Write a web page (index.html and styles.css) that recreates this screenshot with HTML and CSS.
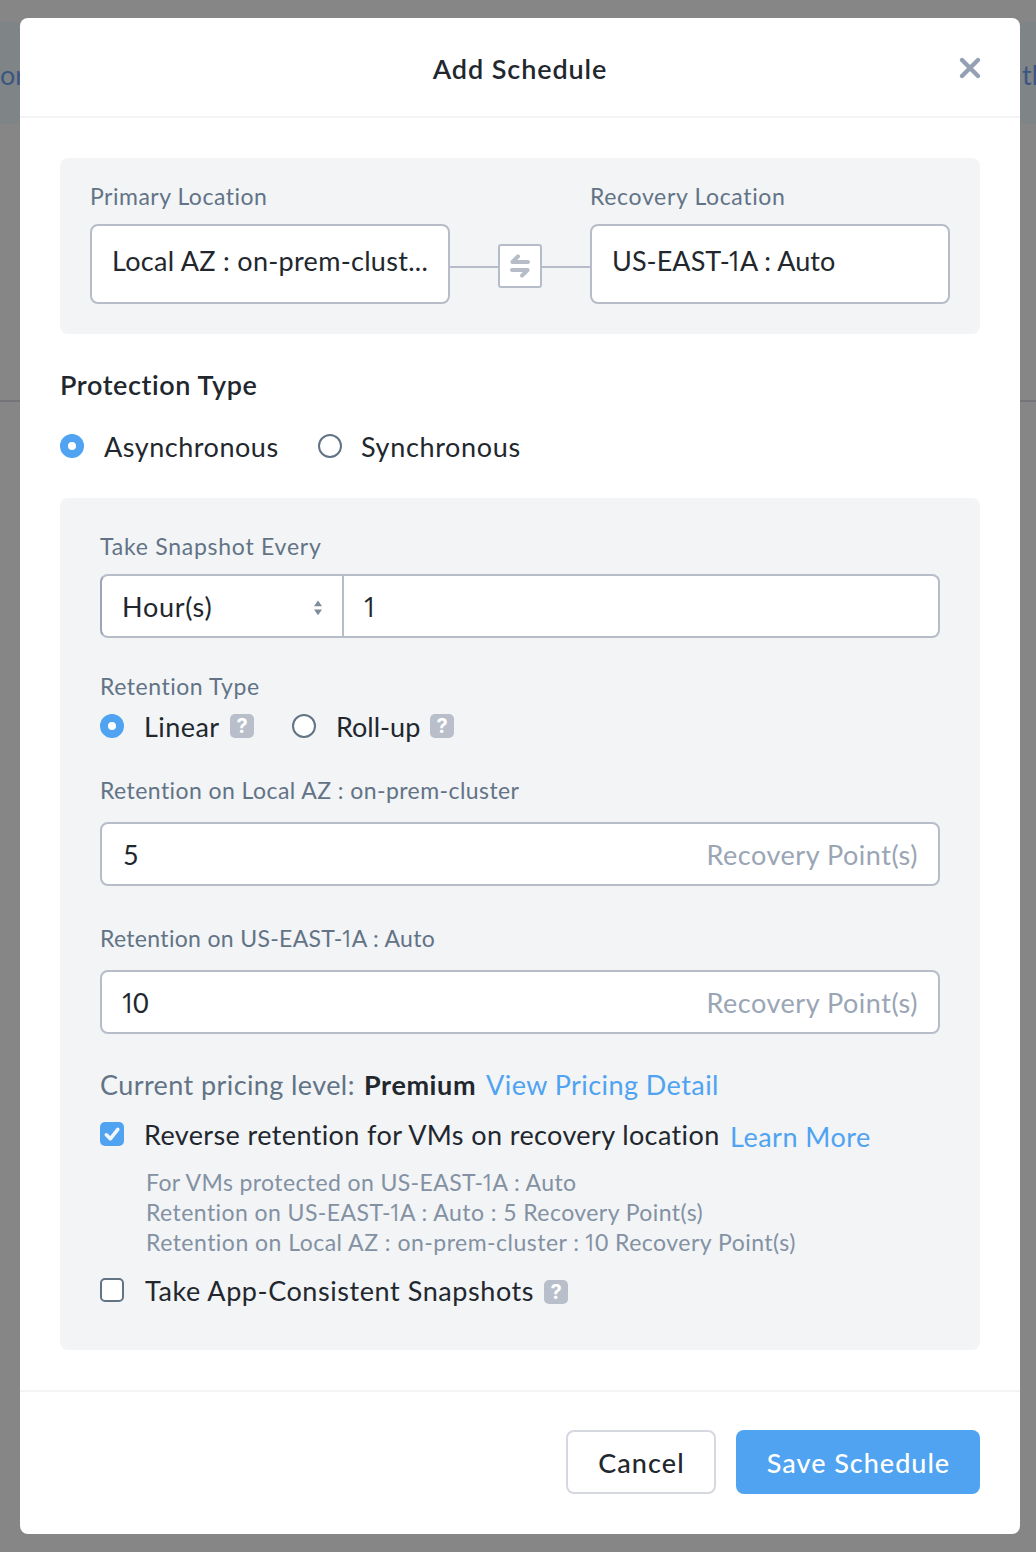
FILE: index.html
```html
<!DOCTYPE html>
<html lang="en">
<head>
<meta charset="utf-8">
<title>Add Schedule</title>
<link rel="stylesheet" href="styles.css">
</head>
<body>
<div class="backdrop">
  <div class="banner"><span>or</span><span class="banner-end">th</span></div>
  <div class="rule"></div>
</div>
<main class="modal">
  <header class="modal-header">
    <h1 class="title">Add Schedule</h1>
    <svg class="close" viewBox="0 0 24 24"><path d="M4 4L20 20M20 4L4 20"/></svg>
  </header>
  <div class="modal-body">
    <section class="locations">
      <div class="location">
        <div class="label primary-label">Primary Location</div>
        <div class="location-box onprem">Local AZ : on-prem-clust...</div>
      </div>
      <div class="connector">
        <div class="wire"></div>
        <div class="swap"><svg viewBox="0 0 20 24"><path d="M18 8H2.4L8 2.4M2 16H17.6L12 21.6"/></svg></div>
        <div class="wire"></div>
      </div>
      <div class="location">
        <div class="label recovery-label">Recovery Location</div>
        <div class="location-box east">US-EAST-<span class="one">1</span>A : Auto</div>
      </div>
    </section>

    <h2 class="section-title">Protection Type</h2>
    <div class="row protection">
      <span class="radio checked"></span><span class="text async">Asynchronous</span>
      <span class="radio"></span><span class="text sync">Synchronous</span>
    </div>

    <section class="settings">
      <div class="label snapshot-label">Take Snapshot Every</div>
      <div class="field combo">
        <div class="unit"><span>Hour(s)</span>
          <svg class="sort" viewBox="0 0 8 16"><path d="M4 .5L8 6.3H0ZM0 9.5H8L4 15.3Z"/></svg>
        </div>
        <div class="count"><span class="one">1</span></div>
      </div>

      <div class="label type-label">Retention Type</div>
      <div class="row retention">
        <span class="radio checked"></span><span class="text linear">Linear</span><span class="help">?</span>
        <span class="radio second"></span><span class="text rollup">Roll-up</span><span class="help">?</span>
      </div>

      <div class="label local-label">Retention on Local AZ : on-prem-cluster</div>
      <div class="field"><span>5</span><span class="suffix">Recovery Point(s)</span></div>

      <div class="label east-label">Retention on US-EAST-<span class="one">1</span>A : Auto</div>
      <div class="field"><span><span class="one">1</span>0</span><span class="suffix">Recovery Point(s)</span></div>

      <div class="row pricing">
        <span class="muted">Current pricing level:</span><strong class="level">Premium</strong><a class="link detail">View Pricing Detail</a>
      </div>
      <div class="row reverse">
        <span class="check on"><svg viewBox="0 0 24 24"><path d="M6.3 12.8L10.3 16.8L17.8 7.4"/></svg></span>
        <span class="text reverse-text">Reverse retention for VMs on recovery location</span><a class="link learn">Learn More</a>
      </div>
      <div class="notes">
        <div class="note-vms">For VMs protected on US-EAST-<span class="one">1</span>A : Auto</div>
        <div class="note-east">Retention on US-EAST-<span class="one">1</span>A : Auto : 5 Recovery Point(s)</div>
        <div class="note-local">Retention on Local AZ : on-prem-cluster : <span class="one">1</span>0 Recovery Point(s)</div>
      </div>
      <div class="row">
        <span class="check"></span><span class="text app">Take App-Consistent Snapshots</span><span class="help low">?</span>
      </div>
    </section>
  </div>
  <footer class="modal-footer">
    <button class="btn cancel">Cancel</button>
    <button class="btn save">Save Schedule</button>
  </footer>
</main>
</body>
</html>
```
FILE: styles.css
```css
* { box-sizing: border-box; }
body {
  margin: 0;
  height: 1552px;
  padding: 18px 16px 18px 20px;
  overflow: hidden;
  position: relative;
  background: #868686;
  color: #22272e;
  font: 400 27px/32px Lato, "Open Sans", sans-serif;
  white-space: nowrap;
}
.backdrop { position: absolute; inset: 0; padding-top: 22px; }
.banner {
  height: 102px;
  padding-top: 37px;
  display: flex;
  justify-content: space-between;
  background: #7f8587;
  color: #3c5580;
}
.banner-end { width: 14px; }
.rule { margin-top: 276px; height: 2px; background: #747578; }

.modal {
  position: relative;
  width: 1000px;
  height: 1516px;
  background: #fff;
  border-radius: 8px;
}
.modal-header {
  height: 100px;
  padding: 0 38px;
  display: grid;
  grid-template-columns: 24px 1fr 24px;
  align-items: center;
  border-bottom: 2px solid #f2f4f6;
}
.title {
  grid-column: 2;
  margin: 3px 0 0;
  text-align: center;
  font-size: 27px;
  font-weight: 600;
  letter-spacing: .9px;
}
.close { width: 24px; height: 24px; fill: none; stroke: #94a0b3; stroke-width: 4.4; stroke-linecap: round; margin-top: 2px; }
.modal-body { padding: 40px 40px 0; }

.locations {
  height: 176px;
  padding: 24px 30px 30px;
  display: flex;
  background: #f2f4f6;
  border-radius: 8px;
}
.location { width: 360px; }
.label { font-size: 23px; line-height: 28px; color: #627386; }
.location .label { margin-bottom: 14px; }
.location-box {
  height: 80px;
  padding: 19px 20px 0;
  background: #fff;
  border: 2px solid #b6bdc9;
  border-radius: 8px;
}
.primary-label { letter-spacing: .5px; }
.recovery-label { letter-spacing: .65px; }
.onprem { letter-spacing: .3px; }
.east { letter-spacing: .05px; }
.connector { width: 140px; height: 44px; margin-top: 62px; display: flex; align-items: center; }
.wire { flex: 1; height: 2px; margin-top: 2px; background: #b6bdc9; }
.swap {
  width: 44px;
  height: 44px;
  display: grid;
  place-items: center;
  background: #fff;
  border: 2px solid #b6bdc9;
  border-radius: 3px;
}
.swap svg { width: 20px; height: 24px; fill: none; stroke: #b6bdc9; stroke-width: 4; stroke-linecap: round; stroke-linejoin: round; }

/* Footless numeral one */
.one { font-family: "Open Sans", sans-serif; margin: 0 -.1em; line-height: 1; }

.section-title { margin: 35px 0 29px; font-size: 27px; line-height: 32px; font-weight: 600; letter-spacing: .6px; }
.row { display: flex; align-items: center; height: 32px; }
.radio { width: 24px; height: 24px; flex: none; border: 2px solid #627386; border-radius: 50%; background: #fff; }
.radio.checked { border: 8px solid #4fa3f0; }
.text { padding: 2px 0 0 20px; }
.async { width: 234px; letter-spacing: .52px; }
.sync { padding-left: 19px; letter-spacing: .65px; }

.settings {
  height: 852px;
  margin-top: 36px;
  padding: 34px 40px 0;
  background: #f2f4f6;
  border-radius: 8px;
}
.field {
  height: 64px;
  padding: 2px 20px 0;
  display: flex;
  align-items: center;
  justify-content: space-between;
  background: #fff;
  border: 2px solid #b6bdc9;
  border-radius: 8px;
}
.field > span:first-child { padding-left: 1px; }
.suffix { color: #9aa5b5; letter-spacing: .53px; }
.snapshot-label { margin-bottom: 14px; letter-spacing: .75px; }
.combo { padding: 0; border-left-color: #9aa5b5; }
.unit {
  width: 242px;
  height: 60px;
  padding: 2px 20px 0;
  display: flex;
  align-items: center;
  justify-content: space-between;
  border-right: 2px solid #b6bdc9;
  letter-spacing: .7px;
}
.sort { width: 8px; height: 16px; fill: #7f8c9d; margin-top: 2px; }
.count { flex: 1; padding: 2px 0 0 21px; }
.type-label { margin: 34px 0 10px; letter-spacing: .54px; }
.linear { width: 106px; letter-spacing: .45px; }
.rollup { width: 114px; }
.second { margin-left: 38px; }
.help {
  width: 24px;
  height: 24px;
  background: #b8bfca;
  border-radius: 5px;
  color: #fff;
  font: 700 20px/25px Inter, sans-serif;
  text-align: center;
}
.local-label { margin: 34px 0 18px; letter-spacing: .43px; }
.east-label { margin: 38px 0 18px; letter-spacing: .32px; }
.pricing { margin: 35px 0 17px; }
.muted { width: 264px; color: #627386; letter-spacing: .41px; }
.level { width: 122px; font-weight: 700; letter-spacing: .6px; }
.link { color: #4fa3f0; }
.detail { letter-spacing: .44px; }
.check { width: 24px; height: 24px; flex: none; border: 2px solid #627386; border-radius: 5px; background: #fff; }
.check.on { border: 0; background: #4fa3f0; }
.check svg { display: block; fill: none; stroke: #f2f6fb; stroke-width: 3.6; stroke-linecap: round; stroke-linejoin: round; }
.reverse-text { width: 606px; letter-spacing: .39px; }
.learn { letter-spacing: .5px; margin-top: 6px; }
.notes { margin: 17px 0 17px; padding-left: 46px; font-size: 23px; line-height: 30px; color: #8391a3; }
.note-vms { letter-spacing: .39px; }
.note-east { letter-spacing: .43px; }
.note-local { letter-spacing: .48px; }
.app { width: 420px; padding-left: 21px; letter-spacing: .57px; }
.low { margin-top: 4px; }

.modal-footer {
  height: 144px;
  margin-top: 40px;
  padding: 38px 40px 0;
  display: flex;
  justify-content: flex-end;
  gap: 20px;
  border-top: 2px solid #f2f4f6;
}
.btn { height: 64px; padding: 2px 0 0 1px; border: 0; border-radius: 8px; font: 500 27px/32px Lato, sans-serif; }
.cancel { width: 150px; background: #fff; color: #22272e; border: 2px solid #d5d9df; letter-spacing: 1.1px; }
.save { width: 244px; background: #4fa3f0; color: #fff; letter-spacing: .99px; }
```
